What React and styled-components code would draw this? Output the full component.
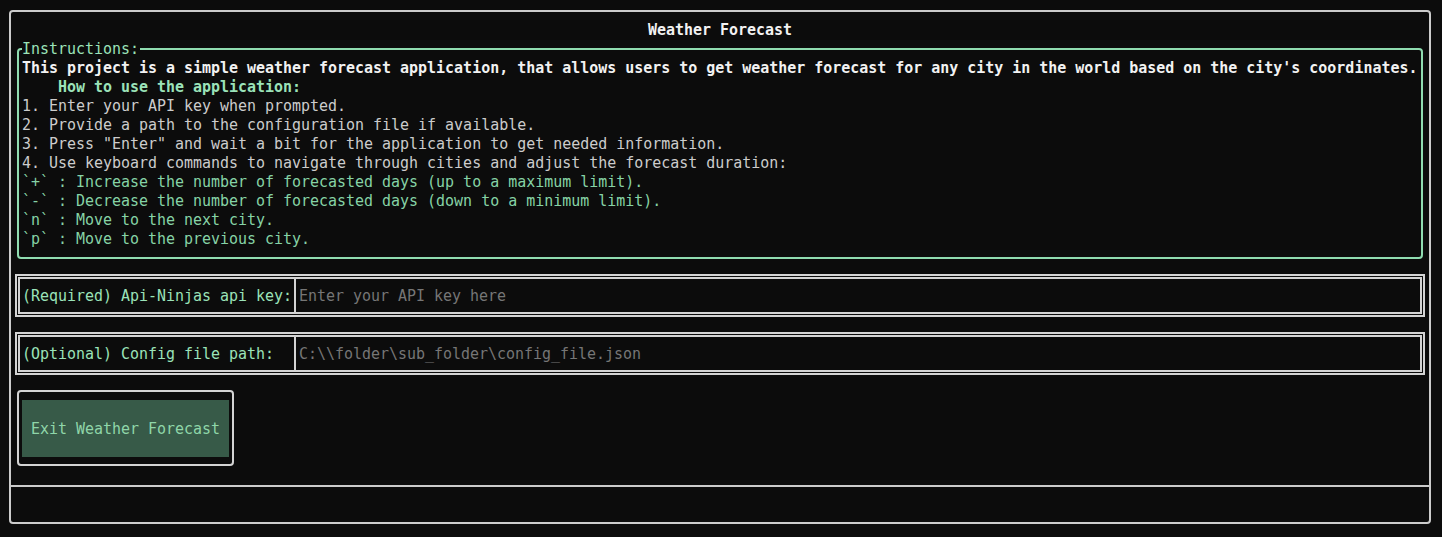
import React from "react";
import styled, { createGlobalStyle } from "styled-components";

const Global = createGlobalStyle`
  html, body { margin: 0; padding: 0; background: #0c0c0c; }
  body {
    font-family: "DejaVu Sans Mono", "Liberation Mono", monospace;
    font-size: 14.96px;
    line-height: 19px;
    color: #cccccc;
  }
  * { box-sizing: border-box; }
`;

const Screen = styled.div`
  width: 1442px;
  height: 537px;
  padding: 10px 11px 13px 9px;
`;

const Frame = styled.div`
  height: 514px;
  border: 2px solid #cccccc;
  border-radius: 4px;
  display: flex;
  flex-direction: column;
`;

const Main = styled.div`
  flex: 1;
  padding-top: 9px;
  display: flex;
  flex-direction: column;
`;

const Title = styled.div`
  text-align: center;
  color: #f2f2f2;
  font-weight: bold;
  height: 19px;
`;

const Fieldset = styled.div`
  position: relative;
  margin: 8px 6px 0 6px;
  border: 2px solid #8fdcb0;
  border-radius: 4px;
  padding: 9px 3px 8px 3px;
`;

const Legend = styled.span`
  position: absolute;
  top: -10px;
  left: 3px;
  background: #0c0c0c;
  color: #9be3b9;
  padding-right: 1px;
`;

const Line = styled.div`
  white-space: pre;
  height: 19px;
  color: ${(p) =>
    p.$tone === "lead" ? "#f2f2f2" : p.$tone === "head" ? "#9be3b9" : p.$tone === "key" ? "#86d3a6" : "#cccccc"};
  font-weight: ${(p) => (p.$tone === "lead" || p.$tone === "head" ? "bold" : "normal")};
`;

const Field = styled.div`
  margin: 15px 4px 0 4px;
  border: 5px double #d4d4d4;
  display: flex;
  height: 43px;
`;

const FieldLabel = styled.div`
  width: 276px;
  flex: none;
  padding: 8px 0 0 2px;
  border-right: 2px solid #d4d4d4;
  color: #9be3b9;
  white-space: pre;
`;

const FieldInput = styled.input`
  flex: 1;
  background: transparent;
  border: none;
  outline: none;
  font: inherit;
  color: #cccccc;
  padding: 1px 0 0 3px;
  &::placeholder { color: #767676; }
`;

const ButtonWrap = styled.div`
  margin: 15px 0 0 6px;
  width: 217px;
  border: 2px solid #d4d4d4;
  border-radius: 4px;
  padding: 8px 3px 7px 3px;
`;

const Button = styled.button`
  width: 207px;
  height: 57px;
  background: #375a48;
  border: none;
  font: inherit;
  color: #8fd6a9;
  text-align: center;
  padding: 2px 0 0 0;
`;

const Footer = styled.div`
  height: 37px;
  border-top: 2px solid #cccccc;
`;

const lines = [
  ["lead", "This project is a simple weather forecast application, that allows users to get weather forecast for any city in the world based on the city's coordinates."],
  ["head", "    How to use the application:"],
  ["text", "1. Enter your API key when prompted."],
  ["text", "2. Provide a path to the configuration file if available."],
  ["text", '3. Press "Enter" and wait a bit for the application to get needed information.'],
  ["text", "4. Use keyboard commands to navigate through cities and adjust the forecast duration:"],
  ["key", "`+` : Increase the number of forecasted days (up to a maximum limit)."],
  ["key", "`-` : Decrease the number of forecasted days (down to a minimum limit)."],
  ["key", "`n` : Move to the next city."],
  ["key", "`p` : Move to the previous city."],
];

const configPlaceholder = String.raw`C:\\folder\sub_folder\config_file.json`;

export default function App() {
  return (
    <Screen>
      <Global />
      <Frame>
        <Main>
          <Title>Weather Forecast</Title>
          <Fieldset>
            <Legend>Instructions:</Legend>
            {lines.map(([tone, text], i) => (
              <Line key={i} $tone={tone}>{text}</Line>
            ))}
          </Fieldset>
          <Field>
            <FieldLabel>(Required) Api-Ninjas api key:</FieldLabel>
            <FieldInput placeholder="Enter your API key here" />
          </Field>
          <Field>
            <FieldLabel>(Optional) Config file path:</FieldLabel>
            <FieldInput placeholder={configPlaceholder} />
          </Field>
          <ButtonWrap>
            <Button>Exit Weather Forecast</Button>
          </ButtonWrap>
        </Main>
        <Footer />
      </Frame>
    </Screen>
  );
}
